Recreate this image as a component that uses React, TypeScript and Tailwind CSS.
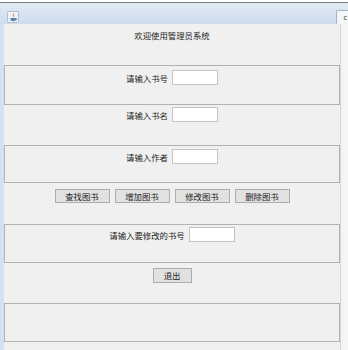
import React from "react";

const cjk = { fontFamily: '"Noto Sans CJK SC", "Noto Sans", sans-serif' };

function JavaIcon() {
  return (
    <div className="flex h-[12px] w-[12px] items-center justify-center rounded-[1px] border border-[#b5c0cc] bg-[#eef2f6]">
      <svg width="9" height="9" viewBox="0 0 9 9">
        <path d="M4.5 0.5 C3.5 1.8 5.5 2.3 4.3 3.8" stroke="#e0761f" strokeWidth="1" fill="none" />
        <path d="M1.5 5 H7 V6.6 C7 7.6 6 8.2 4.2 8.2 C2.5 8.2 1.5 7.6 1.5 6.6 Z" fill="#5a7fa8" />
        <path d="M7 5.5 C8.3 5.5 8.3 7 7 7" stroke="#5a7fa8" strokeWidth="0.8" fill="none" />
      </svg>
    </div>
  );
}

function Field({ label }: { label: string }) {
  return (
    <div className="flex items-center justify-center gap-[4px] pt-[4px]">
      <span className="text-[8.4px] leading-[14px] text-[#222]">{label}</span>
      <div className="h-[15px] w-[46px] border border-[#c4c4c4] bg-white" />
    </div>
  );
}

function Btn({ label, w }: { label: string; w: string }) {
  return (
    <div
      className={`${w} flex h-[14px] items-center justify-center border border-[#adadad] bg-[#e1e1e1] text-[8.4px] leading-none text-[#222]`}
    >
      {label}
    </div>
  );
}

export default function App() {
  return (
    <div className="flex h-[350px] w-[348px] flex-col overflow-hidden bg-[#f3f3f3]" style={cjk}>
      <div className="h-[2px] bg-white" />
      <div className="h-[1px] bg-[#7c7c7c]" />
      <div className="flex h-[21px] items-end justify-between bg-gradient-to-b from-[#e2ebf5] to-[#cddcee]">
        <div className="mb-[1px] ml-[7px]">
          <JavaIcon />
        </div>
        <div className="mb-[-1px] flex h-[15px] w-[12px] items-center justify-end rounded-tl-[2px] border border-r-0 border-[#a8b4c2] bg-[#f4f6f9] pr-[1px] text-[7px] leading-none text-[#333]">
          c
        </div>
      </div>
      <div className="flex flex-1">
        <div className="w-[4px] bg-[#d0e1f2]" />
        <div className="flex w-[337px] flex-col border-r border-[#d6d6d6] bg-[#f0f0f0]">
          <div className="h-[41px] pt-[5px] text-center text-[8.4px] leading-[12px] text-[#222]">
            欢迎使用管理员系统
          </div>
          <div className="h-[40px] border border-[#b2b2b2]">
            <Field label="请输入书号" />
          </div>
          <div className="h-[40px] pt-[-1px]">
            <div className="-mt-[2px]">
              <Field label="请输入书名" />
            </div>
          </div>
          <div className="h-[38px] border border-[#b2b2b2]">
            <div className="-mt-[1px]">
              <Field label="请输入作者" />
            </div>
          </div>
          <div className="flex h-[41px] justify-center gap-[5px] pt-[6px]">
            <Btn label="查找图书" w="w-[55px]" />
            <Btn label="增加图书" w="w-[55px]" />
            <Btn label="修改图书" w="w-[55px]" />
            <Btn label="删除图书" w="w-[55px]" />
          </div>
          <div className="h-[39px] border border-[#b2b2b2]">
            <div className="-mt-[2px]">
              <Field label="请输入要修改的书号" />
            </div>
          </div>
          <div className="flex h-[40px] justify-center pt-[5px]">
            <div className="flex h-[15px] w-[39px] items-center justify-center border border-[#adadad] bg-[#e1e1e1] text-[8.4px] leading-none text-[#222]">
              退出
            </div>
          </div>
          <div className="h-[39px] border border-[#b2b2b2]" />
          <div className="flex-1" />
        </div>
        <div className="flex-1 bg-[#f5f5f5]" />
      </div>
    </div>
  );
}
